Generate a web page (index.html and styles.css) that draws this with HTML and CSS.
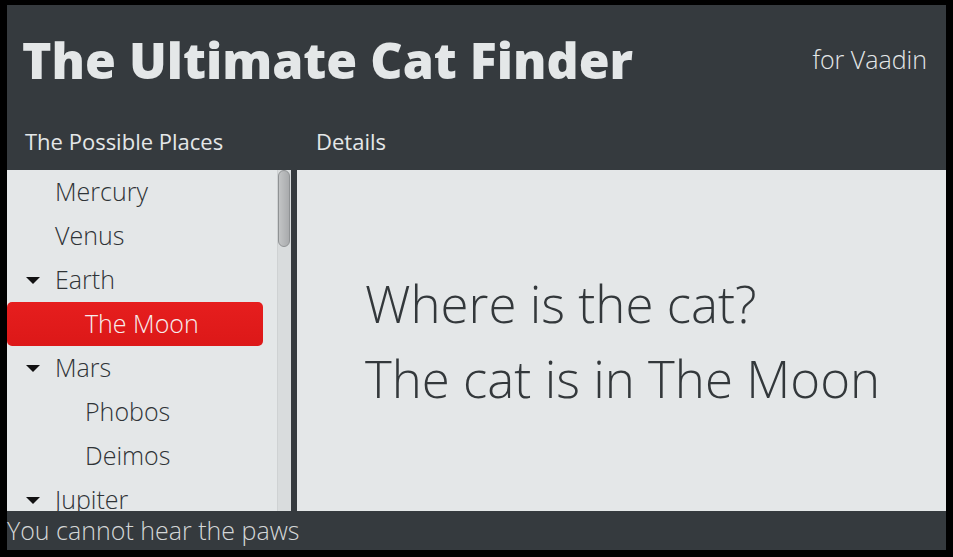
FILE: index.html
```html
<!DOCTYPE html>
<html>
<head>
<meta charset="utf-8">
<link rel="stylesheet" href="styles.css">
</head>
<body>
<div class="frame">
  <div class="app">
    <header class="topbar">
      <h1 class="title">The Ultimate Cat Finder</h1>
      <div class="brand">for Vaadin</div>
    </header>
    <div class="captions">
      <div class="cap cap-tree">The Possible Places</div>
      <div class="cap cap-detail">Details</div>
    </div>
    <main class="main">
      <div class="tree-panel">
        <ul class="tree">
          <li class="row lvl0"><span class="text">Mercury</span></li>
          <li class="row lvl0"><span class="text">Venus</span></li>
          <li class="row lvl0"><span class="arrow"></span><span class="text">Earth</span></li>
          <li class="row lvl1 selected"><span class="text">The Moon</span></li>
          <li class="row lvl0"><span class="arrow"></span><span class="text">Mars</span></li>
          <li class="row lvl1"><span class="text">Phobos</span></li>
          <li class="row lvl1"><span class="text">Deimos</span></li>
          <li class="row lvl0"><span class="arrow"></span><span class="text">Jupiter</span></li>
        </ul>
        <div class="scrollbar"><div class="thumb"></div></div>
      </div>
      <div class="splitter"></div>
      <div class="detail">
        <p class="line">Where is the cat?</p>
        <p class="line">The cat is in The Moon</p>
      </div>
    </main>
    <footer class="status">You cannot hear the paws</footer>
  </div>
</div>
</body>
</html>
```
FILE: styles.css
```css
* { box-sizing: border-box; }
html, body { margin: 0; padding: 0; }
body {
  background: #000;
  font-family: "Open Sans", "DejaVu Sans", sans-serif;
  width: 953px;
  height: 557px;
  overflow: hidden;
}
.frame {
  padding: 5px 7px 7px 7px;
  height: 557px;
}
.app {
  height: 545px;
  display: flex;
  flex-direction: column;
  background: #353a3e;
}
.topbar {
  height: 113px;
  display: flex;
  align-items: flex-start;
  justify-content: space-between;
  padding: 0 19px 0 15px;
}
.title {
  margin: 0;
  margin-top: 25px;
  font-family: "Open Sans", sans-serif;
  font-weight: 800;
  font-size: 50px;
  line-height: 60px;
  color: #e4e7e8;
}
.brand {
  margin-top: 39px;
  font-weight: 300;
  font-size: 25px;
  line-height: 30px;
  color: #e4e7e8;
}
.captions {
  height: 52px;
  display: flex;
  color: #e4e7e8;
  font-size: 22px;
  font-weight: 400;
}
.cap { padding-top: 8px; line-height: 30px; }
.cap-tree { width: 290px; padding-left: 18px; }
.cap-detail { padding-left: 19px; }
.main {
  flex: 1;
  display: flex;
  min-height: 0;
}
.tree-panel {
  width: 284px;
  background: #e4e7e8;
  display: flex;
  overflow: hidden;
}
.tree {
  list-style: none;
  margin: 0;
  padding: 0;
  flex: 1;
}
.row {
  height: 44px;
  display: flex;
  align-items: center;
  padding-bottom: 2px;
  font-size: 25px;
  font-weight: 300;
  color: #2f3336;
  position: relative;
}
.lvl0 { padding-left: 48px; }
.lvl1 { padding-left: 78px; }
.arrow {
  position: absolute;
  left: 19px;
  top: 19px;
  width: 0;
  height: 0;
  border-left: 7px solid transparent;
  border-right: 7px solid transparent;
  border-top: 7px solid #111;
}
.selected {
  margin-right: 14px;
  background: linear-gradient(#e61e1e, #dc1818);
  border-radius: 5px;
  color: #f7eded;
}
.scrollbar {
  width: 14px;
  background: #d9dcdd;
  border-left: 1px solid #cfd2d3;
  padding: 0 1px 0 0;
}
.thumb {
  width: 12px;
  height: 77px;
  border: 1px solid #8f9294;
  border-radius: 6px;
  background: linear-gradient(to right, #c2c4c5, #a9abad);
}
.splitter {
  width: 6px;
  background: #353a3e;
}
.detail {
  flex: 1;
  background: #e4e7e8;
  padding: 96px 0 0 68px;
}
.line {
  margin: 0;
  font-size: 51px;
  font-weight: 300;
  line-height: 75px;
  color: #33383b;
  height: 75px;
}
.status {
  height: 39px;
  font-size: 25px;
  font-weight: 300;
  color: #d4d7d8;
  line-height: 38px;
}
```
